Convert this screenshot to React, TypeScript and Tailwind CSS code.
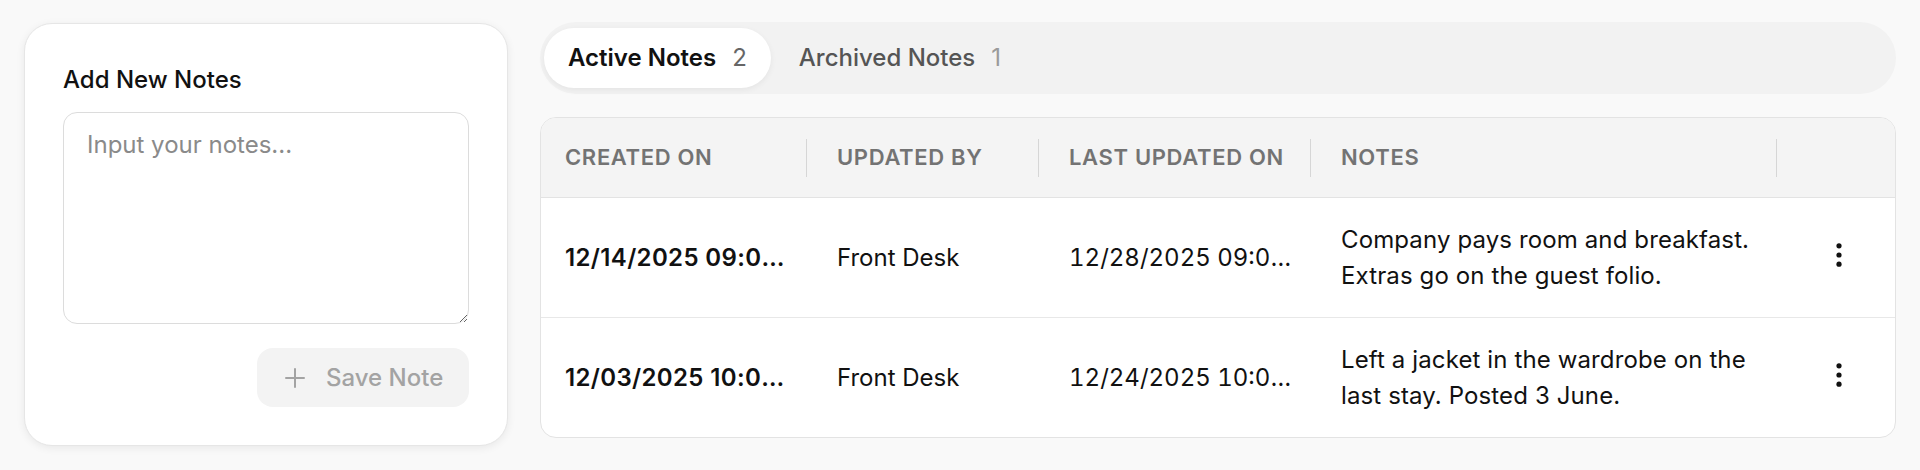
import React from "react";

const rows = [
  {
    created: "12/14/2025 09:00 AM",
    by: "Front Desk",
    updated: "12/28/2025 09:00 AM",
    note: "Company pays room and breakfast. Extras go on the guest folio.",
  },
  {
    created: "12/03/2025 10:00 AM",
    by: "Front Desk",
    updated: "12/24/2025 10:00 AM",
    note: "Left a jacket in the wardrobe on the last stay. Posted 3 June.",
  },
];

function Kebab() {
  return (
    <svg width="12" height="28" viewBox="0 0 12 28" fill="#111">
      <circle cx="6" cy="4.8" r="2.6" />
      <circle cx="6" cy="14" r="2.6" />
      <circle cx="6" cy="23.2" r="2.6" />
    </svg>
  );
}

function HeaderCell({ label, sep = true }: { label: string; sep?: boolean }) {
  return (
    <div className="relative flex items-center px-6">
      <span className="text-[22px] font-semibold tracking-[0.03em] text-[#737373] whitespace-nowrap">
        {label}
      </span>
      {sep && (
        <span className="absolute right-[6px] top-1/2 -translate-y-1/2 h-[38px] w-px bg-[#d6d6d6]" />
      )}
    </div>
  );
}

export default function App() {
  return (
    <div
      className="min-h-[470px] bg-[#f9f9f9] flex gap-8 px-6 pt-[22px] text-[#111]"
      style={{ fontFamily: "Inter, 'Noto Sans', sans-serif" }}
    >
      {/* Left card */}
      <div className="mt-px w-[484px] shrink-0 self-start rounded-[28px] border border-[#e6e6e6] bg-white p-[38px] shadow-[0_2px_8px_rgba(0,0,0,0.07)] flex flex-col">
        <div className="text-[24px] leading-[36px] font-medium text-[#111]">Add New Notes</div>
        <textarea
          placeholder="Input your notes..."
          className="mt-[14px] h-[212px] w-full rounded-[14px] border border-[#dcdcdc] bg-white px-[23px] py-[14px] text-[24px] leading-[36px] text-[#111] outline-none placeholder:text-[#8a8a8a]"
        />
        <button className="mt-6 self-end flex h-[59px] w-[212px] items-center gap-[21px] rounded-[16px] bg-[#f3f3f3] pl-[28px] text-[24px] font-medium text-[#a3a3a3]">
          <svg width="20" height="20" viewBox="0 0 20 20" stroke="#a3a3a3" strokeWidth="2" strokeLinecap="round" fill="none">
            <path d="M10 1v18M1 10h18" />
          </svg>
          <span>Save Note</span>
        </button>
      </div>

      {/* Right column */}
      <div className="flex-1 flex flex-col">
        <div className="h-[72px] rounded-full bg-[#f2f2f2] py-[6px] pl-1 pr-[6px] flex items-center gap-1">
          <div className="h-[60px] rounded-full bg-white px-6 flex items-center gap-4 shadow-[0_2px_6px_rgba(0,0,0,0.06)]">
            <span className="text-[24px] font-semibold text-[#111]">Active Notes</span>
            <span className="text-[24px] text-[#666]">2</span>
          </div>
          <div className="h-[60px] rounded-full px-6 flex items-center gap-4">
            <span className="text-[24px] font-medium text-[#555]">Archived Notes</span>
            <span className="text-[24px] text-[#9a9a9a]">1</span>
          </div>
        </div>

        <div className="mt-[23px] rounded-[16px] border border-[#e3e3e3] bg-white overflow-hidden">
          <div className="grid grid-cols-[272px_232px_272px_1fr_112px] h-[80px] bg-[#f4f4f4] border-b border-[#e3e3e3]">
            <HeaderCell label="CREATED ON" />
            <HeaderCell label="UPDATED BY" />
            <HeaderCell label="LAST UPDATED ON" />
            <HeaderCell label="NOTES" />
            <div />
          </div>
          {rows.map((r, i) => (
            <div
              key={i}
              className={`grid grid-cols-[272px_232px_272px_1fr_112px] items-center text-[24px] leading-[36px] ${
                i === 0 ? "h-[120px] border-b border-[#e8e8e8]" : "h-[119px]"
              }`}
            >
              <div className="px-6 truncate font-semibold tracking-[0.015em] text-[#111]">{r.created}</div>
              <div className="px-6 truncate text-[#111]">{r.by}</div>
              <div className="px-6 truncate tabular-nums text-[#111]">{r.updated}</div>
              <div className="px-6 tracking-[0.005em] text-[#111]">{r.note}</div>
              <div className="flex justify-center -translate-y-[3px]">
                <Kebab />
              </div>
            </div>
          ))}
        </div>
      </div>
    </div>
  );
}
